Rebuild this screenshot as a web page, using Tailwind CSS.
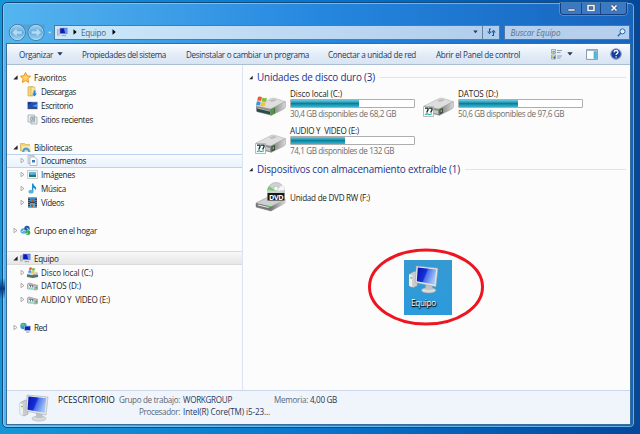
<!DOCTYPE html>
<html lang="es">
<head>
<meta charset="utf-8">
<title>Equipo</title>
<script src="https://cdn.jsdelivr.net/npm/@tailwindcss/browser@4"></script>
</head>
<body class="w-[640px] h-[434px] overflow-hidden bg-linear-to-r from-[#1696d6] via-[#0874cc] to-[#04479b] font-['Open_Sans','Noto_Sans',sans-serif] text-[8.1px] leading-[11px] text-[#1c1c1c] whitespace-nowrap">
<svg class="absolute w-0 h-0">
  <defs>
    <linearGradient id="scr" x1="0" y1="0" x2="1" y2="0.35"><stop offset="0" stop-color="#0712a8"/><stop offset=".5" stop-color="#1530d8"/><stop offset=".58" stop-color="#4a72ea"/><stop offset="1" stop-color="#a3c3f6"/></linearGradient>
    <linearGradient id="dark" x1="0" y1="0" x2="1" y2="0"><stop offset="0" stop-color="#777"/><stop offset="1" stop-color="#d8d8d8"/></linearGradient>
    <linearGradient id="nav" x1="0" y1="0" x2="0" y2="1"><stop offset="0" stop-color="#a9d3f3"/><stop offset=".5" stop-color="#5fa9de"/><stop offset="1" stop-color="#9fdcf8"/></linearGradient>
    <symbol id="pc" viewBox="0 0 30 28">
      <path d="M1 9l5-3 3 1v13l-4 2-4-2z" fill="#c9cdd0" stroke="#8d9296" stroke-width=".5"/>
      <path d="M1 9l3 1v11.500l-3-1.500z" fill="#eee"/><circle cx="3" cy="12.500" r=".8" fill="#4eb84e"/>
      <ellipse cx="20" cy="24.500" rx="7" ry="2.600" fill="#d9dcde" stroke="#a1a5a8" stroke-width=".5"/>
      <path d="M17 18h6l1 6h-7z" fill="#bfc3c6"/>
      <path d="M8 1l21 2-2 18L7 17z" fill="#e3e6e8" stroke="#9ba0a5" stroke-width=".5"/>
      <path d="M9.500 2.500l17.800 1.800-1.800 14.500L8.500 15.700z" fill="url(#scr)"/>
    </symbol>
    <symbol id="pcs" viewBox="0 0 12 11">
      <path d="M.5 3h2v6h-2z" fill="#cfd3d8" stroke="#888" stroke-width=".5"/><path d="M3 1h8.500v6.500H3z" fill="#0c1cba" stroke="#c9d2e2" stroke-width=".7"/><path d="M7.500 1.400h3.600v5.700H9z" fill="#6e8fe8"/><path d="M5 8.700h5v1.400H5z" fill="#a5aab2"/>
    </symbol>
    <symbol id="drive" viewBox="0 0 32 20">
      <path d="M1 9L16 1.500Q18 .7 20 1.300L30 4.500 16 12z" fill="#dedede" stroke="#aaa" stroke-width=".5"/>
      <path d="M14 3.500l5-1.500 3 1-5 2z" fill="#bbb"/>
      <path d="M1 9l15 3v6.500l-14-3.500Q1 14.500 1 13z" fill="#8e8e8e"/>
      <path d="M16 12L30.500 4.500V10Q30 11.500 28 12.500L16 18.500z" fill="url(#dark)" stroke="#8a8a8a" stroke-width=".4"/>
      <path d="M3 11l12 3v3L3 14z" fill="#c8c8c8"/>
      <path d="M16.500 12.500l3.500-1.500v5l-3.500 1.500z" fill="#3f4b42"/><path d="M17.500 13l1.500-.6v2.600l-1.500.6z" fill="#3bd63b"/>
    </symbol>
    <symbol id="flag" viewBox="0 0 12 11">
      <path d="M2 1q2-1 4 .3L5 5Q3 4 1 4.800z" fill="#ef5a28"/><path d="M6.500 1.600q2 1 4.500.2L10 5.500q-2 .8-4.500-.2z" fill="#80bd3a"/><path d="M.8 5.500q2-.8 4 .3L3.800 9.500Q2 8.500 0 9.200z" fill="#3597df"/><path d="M5.300 6q2 1 4.500.3L8.800 10q-2.500.7-4.500-.3z" fill="#fbc42b"/>
    </symbol>
    <symbol id="lab" viewBox="0 0 11 11">
      <path d="M.5.500h10v10H.5z" fill="#f7fbfb" stroke="#a3abad" stroke-width=".8"/><path d="M2 2.200h3v1.700L3.700 6.500M6 2.200h3v1.700L7.700 6.500" fill="none" stroke="#172b2b" stroke-width="1.300"/><path d="M2 8.700l2-1 2 1 3-1" fill="none" stroke="#23b0a8" stroke-width="1.200"/>
    </symbol>
    <symbol id="open" viewBox="0 0 5 5"><path d="M4.600.3v4.300H.3z" fill="#222"/></symbol>
    <symbol id="shut" viewBox="0 0 5 5"><path d="M1 .3l3 2.200-3 2.200z" fill="#fff" stroke="#8c8c8c" stroke-width=".7"/></symbol>
    <symbol id="down" viewBox="0 0 6 4"><path d="M.3.300h5.400L3 3.600z" fill="#1e395b"/></symbol>
  </defs>
</svg>
<div class="absolute left-0 top-[278px] w-[5px] h-[21px] bg-linear-to-b from-transparent via-[#063a86] to-transparent"></div>

<div class="ml-[2px] w-[633px] h-[428px] pt-[2px]">
<main class="w-[633px] h-[426px] rounded-[5px] border border-[#164a7b] bg-linear-to-r from-[#55b5ef] via-[#2587df] to-[#1764bd] shadow-[inset_0_0_0_1px_rgba(140,215,255,.65)] px-1 flex flex-col">
  <header class="h-[22px] shrink-0 flex justify-end pr-[3px]">
    <div class="w-[67px] h-[12px] flex border border-t-0 border-[#133e80] rounded-b-[3px] bg-[#3b79c2] shadow-[0_0_0_.5px_#79aee1]">
      <div class="w-[21px] border-r border-[#174586] flex justify-center"><svg class="w-[9px] h-[11px]" viewBox="0 0 9 11"><path d="M1 6h7v2H1z" fill="#fff" stroke="#424b66" stroke-width=".6"/></svg></div>
      <div class="w-[19px] border-r border-[#174586] flex justify-center"><svg class="w-[10px] h-[11px]" viewBox="0 0 10 11"><path d="M2 2.500h6v5H2z" fill="none" stroke="#35435f" stroke-width="2.300"/><path d="M2 2.500h6v5H2z" fill="none" stroke="#fff" stroke-width="1.500"/></svg></div>
      <div class="flex-1 flex justify-center"><svg class="w-[10px] h-[11px]" viewBox="0 0 10 11"><path d="M2.500 2.500l5 5m0-5l-5 5" stroke="#35435f" stroke-width="2.700"/><path d="M2.500 2.500l5 5m0-5l-5 5" stroke="#fff" stroke-width="1.700"/></svg></div>
    </div>
  </header>
  <nav class="h-[14px] shrink-0 flex items-center pl-[1px]">
    <svg class="w-[46px] h-[19px] shrink-0" viewBox="0 0 46 19">
      <path d="M9 1.500h28v3q-14 5-28 0z" fill="#4b95cc" opacity=".5"/>
      <g fill="url(#nav)" stroke="#396d94" stroke-width=".9"><circle cx="9.300" cy="9.500" r="8"/><circle cx="28" cy="9.500" r="8"/></g>
      <g fill="none" stroke="#b7e1fa" stroke-width=".6"><circle cx="9.300" cy="9.500" r="7.200"/><circle cx="28" cy="9.500" r="7.200"/></g>
      <path d="M4 9.500L9 4.700v3.300h5v3H9v3.300zM33.300 9.500l-5-4.800v3.300h-5v3h5v3.300z" fill="#b4dbf3" stroke="#75aed6" stroke-width=".5"/>
      <path d="M39.500 8.500h4.500l-2.200 2.600z" fill="#bfe1f6" stroke="#5e97c4" stroke-width=".4"/>
    </svg>
    <div class="w-[448px] h-[15px] border border-[#4e7b9f] bg-linear-to-r from-[#cbe8fa] to-[#b2cdec] flex items-center">
      <svg class="ml-[2px] w-[11px] h-[10px]"><use href="#pcs"/></svg>
      <svg class="ml-[5px] w-[4px] h-[6px]" viewBox="0 0 4 6"><path d="M.5.300L3.700 3 .5 5.700z"/></svg>
      <span class="ml-[4px] text-[#4c6377]" data-w="25">Equipo</span>
      <svg class="ml-[6px] w-[4px] h-[6px]" viewBox="0 0 4 6"><path d="M.5.300L3.700 3 .5 5.700z"/></svg>
      <svg class="ml-auto mr-[4px] w-[5px] h-[4px]"><use href="#down"/></svg>
      <div class="w-[17px] h-[13px] border-l border-[#64849f] flex justify-center items-center"><svg class="w-[9px] h-[10px]" viewBox="0 0 9 10"><path d="M4 2H2.500v3M.7 4.500l1.800 2 1.500-2M5 8.500h1.500V4.800M4.800 5.500l1.700-2 1.800 2" fill="none" stroke="#135ca6" stroke-width="1.100"/></svg></div>
    </div>
    <div class="ml-[4px] w-[126px] h-[15px] border border-[#4e749f] bg-[#b6cfec] flex items-center pl-[5px] pr-[3px]">
      <span class="italic text-[#59718a]" data-w="50">Buscar Equipo</span>
      <svg class="ml-auto w-[9px] h-[9px]" viewBox="0 0 9 9"><circle cx="5.500" cy="3.400" r="2.500" fill="#dff0fc" stroke="#256bad"/><path d="M3.600 5.300L.8 8.200" stroke="#256bad" stroke-width="1.400"/></svg>
    </div>
  </nav>

  <div class="mt-[5px] w-[623px] h-[380px] ring-1 ring-[#366f9e] flex flex-col bg-[#fcfcfc]">
    <div class="h-[21px] shrink-0 border-b border-[#a9bdd4] bg-linear-to-b from-[#fafcff] via-[#e4edf8] to-[#d8e4f3] flex items-center pl-[12px] text-[#1e395b]">
      <span data-w="34">Organizar</span><svg class="ml-[4px] w-[6px] h-[4px]"><use href="#down"/></svg>
      <span class="ml-[19px]" data-w="84">Propiedades del sistema</span>
      <span class="ml-[20px]" data-w="123">Desinstalar o cambiar un programa</span>
      <span class="ml-[19px]" data-w="88">Conectar a unidad de red</span>
      <span class="ml-[20px]" data-w="84">Abrir el Panel de control</span>
      <svg class="ml-[31px] w-[12px] h-[11px]" viewBox="0 0 12 11"><path d="M.5.500h4v4h-4zM.5 6h4v4h-4z" fill="#d8e6ee" stroke="#809aa9" stroke-width=".7"/><path d="M1.500 2.800h2.300" stroke="#478a56" stroke-width="1.200"/><path d="M1 7h1.500v2H1z" fill="#e8c137"/><path d="M2.700 7.500h1.500v2H2.700z" fill="#284e9e"/><path d="M6 1.500h5M6 3.500h3.500M6 7h5M6 9h3.500" stroke="#8198a8" stroke-width=".9"/></svg>
      <svg class="ml-[4px] w-[6px] h-[4px]"><use href="#down"/></svg>
      <svg class="ml-[13px] w-[12px] h-[11px]" viewBox="0 0 11 10"><path d="M.5.500h10v9H.5z" fill="#fbfdff" stroke="#7790a3" stroke-width=".8"/><path d="M1 1.200h9" stroke="#96aec3"/><path d="M7 2h3v7H7z" fill="#51b4d1"/></svg>
      <svg class="ml-[12px] w-[12px] h-[12px]" viewBox="0 0 11 11"><circle cx="5.500" cy="5.500" r="4.800" fill="#153ba6" stroke="#8ba0bd" stroke-width="1"/><path d="M3.700 4q.2-1.800 2-1.700 1.800.2 1.600 1.700-.2.900-1.200 1.300-.5.300-.5 1.200M5.600 7.500v1.200" fill="none" stroke="#fff" stroke-width="1.200"/></svg>
    </div>

    <div class="h-[325px] shrink-0 flex">
      <aside class="w-[236px] border-r border-[#d9e5f4] pt-[5.700px] flex flex-col">
        <div class="h-[13.900px] pl-[6px] flex items-center"><svg class="w-[5px] h-[5px]"><use href="#open"/></svg><svg class="ml-[2px] w-[11px] h-[11px]" viewBox="0 0 11 11"><path d="M5.500.5l1.500 3.300 3.500.4-2.600 2.500.7 3.700-3.100-1.800-3.100 1.800.7-3.700L.5 4.200 4 3.800z" fill="#ffd35c" stroke="#ed851c" stroke-width=".9"/></svg><span class="ml-[3px]" data-w="32">Favoritos</span></div>
        <div class="h-[13.900px] pl-[20px] flex items-center"><svg class="w-[11px] h-[11px]" viewBox="0 0 11 11"><path d="M1 .8l5-.3v9.500H1z" fill="#f4d67b" stroke="#c69f3d" stroke-width=".6"/><path d="M4 1h4v8.500H4z" fill="#fbe8a5" stroke="#c69f3d" stroke-width=".5"/><path d="M6.500 4.500h2v3H10l-2.500 3L5 7.500h1.500z" fill="#2388dc"/></svg><span class="ml-[3px]" data-w="35">Descargas</span></div>
        <div class="h-[13.900px] pl-[20px] flex items-center"><svg class="w-[11px] h-[11px]" viewBox="0 0 11 11"><path d="M.5 2h10v7H.5z" fill="#1c50b8" stroke="#a8b4c0" stroke-width=".7"/><path d="M1 5q5-4 9-2.700V2.300H1z" fill="#123280"/><path d="M1 8.500h9" stroke="#3a4f75"/><path d="M5 6l5-2v3z" fill="#5298df"/></svg><span class="ml-[3px]" data-w="32">Escritorio</span></div>
        <div class="h-[13.900px] pl-[20px] flex items-center"><svg class="w-[11px] h-[11px]" viewBox="0 0 11 11"><path d="M1 1h6.500v7H1zM4 3h6v7H4z" fill="#e6ebee" stroke="#98a1a7" stroke-width=".7"/><circle cx="5.500" cy="5" r="2" fill="#c5d8e1" stroke="#788e9a" stroke-width=".6"/><path d="M5.500 4v1.300h1" fill="none" stroke="#466" stroke-width=".5"/></svg><span class="ml-[3px]" data-w="52">Sitios recientes</span></div>
        <div class="h-[13.900px]"></div>
        <div class="h-[13.900px] pl-[6px] flex items-center"><svg class="w-[5px] h-[5px]"><use href="#open"/></svg><svg class="ml-[2px] w-[11px] h-[11px]" viewBox="0 0 11 11"><path d="M.5 1.500h4l1 1h4v6.500h-9z" fill="#f1d471" stroke="#cba543" stroke-width=".6"/><path d="M2 4h8.500v5H2z" fill="#fbeaa8"/><path d="M2 10q.5-4.500 4-4.500T10.500 10H8.300q-.2-2-2.200-2T4.200 10z" fill="#4f9fdc"/></svg><span class="ml-[3px]" data-w="38">Bibliotecas</span></div>
        <div class="h-[13.900px] pl-[13px] flex items-center border-y border-[#bad3ee] bg-linear-to-b from-[#f9fbfe] to-[#eaf2fc]"><svg class="w-[5px] h-[5px]"><use href="#shut"/></svg><svg class="ml-[2px] w-[11px] h-[11px] shrink-0" viewBox="0 0 11 11"><path d="M1 .5h6v8H1z" fill="#dfe5ea" stroke="#9da7af" stroke-width=".6"/><path d="M3 2h4.500L10 4v6.500H3z" fill="#fff" stroke="#8c979f" stroke-width=".6"/><path d="M5 5h3v2.500H5z" fill="#3d7abb"/></svg><span class="ml-[3px]" data-w="45">Documentos</span></div>
        <div class="h-[13.900px] pl-[13px] flex items-center"><svg class="w-[5px] h-[5px]"><use href="#shut"/></svg><svg class="ml-[2px] w-[11px] h-[11px]" viewBox="0 0 11 11"><path d="M.5 1.500h10v8H.5z" fill="#f4f7f8" stroke="#a2acb3" stroke-width=".6"/><path d="M2 3h7v5H2z" fill="#5eb4dd"/><path d="M2 5l2 1 5-.5V8H2z" fill="#28766d"/></svg><span class="ml-[3px]" data-w="34">Imágenes</span></div>
        <div class="h-[13.900px] pl-[13px] flex items-center"><svg class="w-[5px] h-[5px]"><use href="#shut"/></svg><svg class="ml-[2px] w-[11px] h-[11px]" viewBox="0 0 11 11"><path d="M5 .5h1.300q.3 2 2 3 1.700 1.500 0 3.700.2-2-2-2.500V8.700H5z" fill="#228bd2"/><ellipse cx="4" cy="8.700" rx="2.600" ry="1.900" fill="#48b7ed"/></svg><span class="ml-[3px]" data-w="25">Música</span></div>
        <div class="h-[13.900px] pl-[13px] flex items-center"><svg class="w-[5px] h-[5px]"><use href="#shut"/></svg><svg class="ml-[2px] w-[11px] h-[11px]" viewBox="0 0 11 11"><path d="M1 .5h9v10H1z" fill="#343e47"/><path d="M3 1h5v4H3z" fill="#3689c5"/><path d="M3 6h5v4H3z" fill="#56aad8"/><path d="M5 2.500h2V5H5zM4 7.500h2V10H4z" fill="#b65931"/><path d="M2 1v10M9 1v10" stroke="#d4dde2" stroke-width=".8" stroke-dasharray="1 1"/></svg><span class="ml-[3px]" data-w="23">Vídeos</span></div>
        <div class="h-[13.900px]"></div>
        <div class="h-[13.900px] pl-[6px] flex items-center"><svg class="w-[5px] h-[5px]"><use href="#shut"/></svg><svg class="ml-[2px] w-[11px] h-[11px]" viewBox="0 0 11 11"><circle cx="3.300" cy="6" r="2.800" fill="#5ca9e5"/><circle cx="7" cy="3.500" r="2.700" fill="#2454ac"/><circle cx="7.800" cy="7.500" r="2.500" fill="#39a84d"/><path d="M2 7l2-2 2 1M6.500 3l2 1-1 2M6 9l2-1" fill="none" stroke="#d8f3ff" stroke-width=".8"/></svg><span class="ml-[3px]" data-w="63">Grupo en el hogar</span></div>
        <div class="h-[13.900px]"></div>
        <div class="h-[13.900px] pl-[6px] flex items-center border-y border-[#dadada] bg-linear-to-b from-[#f8f8f8] to-[#e6e6e6]"><svg class="w-[5px] h-[5px]"><use href="#open"/></svg><svg class="ml-[2px] w-[11px] h-[10px]"><use href="#pcs"/></svg><span class="ml-[3px]" data-w="24.500">Equipo</span></div>
        <div class="h-[13.900px] pl-[13px] flex items-center"><svg class="w-[5px] h-[5px]"><use href="#shut"/></svg><svg class="ml-[2px] w-[11px] h-[11px]" viewBox="0 0 11 11"><use href="#drive" x="0" y="4" width="11" height="7"/><path d="M0 7.500l6 1 5-1V10L6 11 0 10z" fill="#557065"/><use href="#flag" x="1" y="0" width="8" height="7"/></svg><span class="ml-[3px]" data-w="52">Disco local (C:)</span></div>
        <div class="h-[13.900px] pl-[13px] flex items-center"><svg class="w-[5px] h-[5px]"><use href="#shut"/></svg><svg class="ml-[2px] w-[11px] h-[11px]" viewBox="0 0 11 11"><path d="M0 4.500L2 3l9 2.500V9l-2 1-9-1.500z" fill="#bbb" stroke="#8c8c8c" stroke-width=".6"/><use href="#lab" x="1" y="4" width="6" height="6"/><path d="M8.500 7h1.500v1.500H8.500z" fill="#2fae46"/></svg><span class="ml-[3px]" data-w="40">DATOS (D:)</span></div>
        <div class="h-[13.900px] pl-[13px] flex items-center"><svg class="w-[5px] h-[5px]"><use href="#shut"/></svg><svg class="ml-[2px] w-[11px] h-[11px]" viewBox="0 0 11 11"><path d="M0 4.500L2 3l9 2.500V9l-2 1-9-1.500z" fill="#bbb" stroke="#8c8c8c" stroke-width=".6"/><use href="#lab" x="1" y="4" width="6" height="6"/><path d="M8.500 7h1.500v1.500H8.500z" fill="#2fae46"/></svg><span class="ml-[3px]" data-w="69">AUDIO Y&nbsp; VIDEO (E:)</span></div>
        <div class="h-[13.900px]"></div>
        <div class="h-[13.900px] pl-[6px] flex items-center"><svg class="w-[5px] h-[5px]"><use href="#shut"/></svg><svg class="ml-[2px] w-[11px] h-[11px]" viewBox="0 0 11 11"><circle cx="3.500" cy="4" r="3.200" fill="#2c98d9"/><path d="M1 3l2-1.500 2 1-2 2z" fill="#69c75c"/><path d="M4.500 4h6v4.500h-6z" fill="#0d28b9" stroke="#b3c2d5" stroke-width=".7"/><path d="M6 10h3.500" stroke="#8c969f"/></svg><span class="ml-[3px]" data-w="13">Red</span></div>
      </aside>

      <section class="relative flex-1 pl-[6px]">
        <div class="mt-[5px] h-[15px] flex items-center"><svg class="w-[4px] h-[5px]"><use href="#open"/></svg><span class="ml-[4px] text-[9.900px] text-[#1e3287]" data-w="118">Unidades de disco duro (3)</span><div class="ml-[5px] w-[246px] h-px bg-[#e2e4ea]"></div></div>
        <div class="mt-[3px] flex h-[37px]">
          <div class="flex w-[168px] pl-[6px]"><svg class="w-[32px] h-[32px] shrink-0" viewBox="0 0 32 32"><use href="#drive" x="0" y="9" width="32" height="20"/><path d="M2 20.500l13 3v3l-13-3z" fill="#294b49"/><path d="M15.500 21.500l4-2v6l-4 2z" fill="#4b9c3a"/><use href="#flag" x="1" y="8" width="12" height="11"/></svg>
            <div class="ml-[3px]"><div class="h-[11px]"><span data-w="52">Disco local (C:)</span></div><div class="w-[125px] h-[9px] border border-[#aeaeae] rounded-[1px] bg-white"><div class="h-full bg-linear-to-b from-[#67cde0] via-[#0a809d] to-[#32b8d1]" style="width:55%"></div></div><div class="h-[11px] text-[#6d6d6d]"><span data-w="106">30,4 GB disponibles de 68,2 GB</span></div></div></div>
          <div class="flex pl-[6px]"><svg class="w-[32px] h-[32px] shrink-0" viewBox="0 0 32 32"><use href="#drive" x="0" y="9" width="32" height="20"/><use href="#lab" x="0" y="18" width="11" height="11"/></svg>
            <div class="ml-[3px]"><div class="h-[11px]"><span data-w="40">DATOS (D:)</span></div><div class="w-[125px] h-[9px] border border-[#aeaeae] rounded-[1px] bg-white"><div class="h-full bg-linear-to-b from-[#67cde0] via-[#0a809d] to-[#32b8d1]" style="width:48%"></div></div><div class="h-[11px] text-[#6d6d6d]"><span data-w="106">50,6 GB disponibles de 97,6 GB</span></div></div></div>
        </div>
        <div class="flex h-[37px] pl-[6px]"><svg class="w-[32px] h-[32px] shrink-0" viewBox="0 0 32 32"><use href="#drive" x="0" y="9" width="32" height="20"/><use href="#lab" x="0" y="18" width="11" height="11"/></svg>
          <div class="ml-[3px]"><div class="h-[11px]"><span data-w="69">AUDIO Y&nbsp; VIDEO (E:)</span></div><div class="w-[125px] h-[9px] border border-[#aeaeae] rounded-[1px] bg-white"><div class="h-full bg-linear-to-b from-[#67cde0] via-[#0a809d] to-[#32b8d1]" style="width:44%"></div></div><div class="h-[11px] text-[#6d6d6d]"><span data-w="104">74,1 GB disponibles de 132 GB</span></div></div></div>
        <div class="h-[15px] flex items-center"><svg class="w-[4px] h-[5px]"><use href="#open"/></svg><span class="ml-[4px] text-[9.900px] text-[#1e3287]" data-w="203">Dispositivos con almacenamiento extraíble (1)</span><div class="ml-[5px] w-[161px] h-px bg-[#e2e4ea]"></div></div>
        <div class="mt-[3px] flex items-center h-[34px] pl-[6px]"><svg class="w-[32px] h-[32px]" viewBox="0 0 32 32"><circle cx="21" cy="10" r="8.500" fill="#cdd1d1" stroke="#a8adad" stroke-width=".6"/><path d="M21 10L14 5q-1.500 2-1.500 4z" fill="#75cf64"/><path d="M21 10l6-6q2.500 2.500 2.500 5z" fill="#f6f6f6"/><circle cx="21" cy="7.500" r="2.200" fill="#f8f8f8" stroke="#aaa" stroke-width=".5"/><path d="M1 22l12-6 17 2v4l-14 8-15-4z" fill="#cfcfcf" stroke="#888" stroke-width=".5"/><path d="M1 22l15 3.500v4.500L1 26z" fill="#777"/><path d="M3 24l11 2.600" stroke="#eee"/><path d="M16 25.500L30 18v4l-14 8z" fill="url(#dark)"/><path d="M12 24.500l2.500.6v1.700l-2.500-.6z" fill="#4bd54b"/><path d="M12.500 12h17v7.500h-17z" fill="#171717"/><text x="14" y="18.500" font-size="7.200" font-weight="bold" textLength="14.500" fill="#fff" font-family="Open Sans">DVD</text></svg><span class="ml-[3px]" data-w="80">Unidad de DVD RW (F:)</span></div>
        <svg class="absolute left-[124px] top-[182px] w-[119px] h-[80px]" viewBox="0 0 119 80"><ellipse cx="59" cy="40" rx="56.500" ry="37" fill="none" stroke="#ed1620" stroke-width="3"/></svg>
        <div class="absolute left-[161px] top-[195px] w-[48px] h-[55px] bg-linear-to-b from-[#3599d2] to-[#2a9bdc] flex flex-col items-center pt-[5px]"><svg class="w-[31px] h-[29px] -ml-[9px]"><use href="#pc"/></svg><span class="mt-[3px] -ml-[9px] text-white [text-shadow:0_1px_1px_#000,1px_1px_1px_#000]" data-w="25">Equipo</span></div>
      </section>
    </div>
    <footer class="flex-1 border-t border-[#cbd7e8] bg-[#f0f4fb] flex pl-[12px] pt-[2px] text-[#1e395b]">
      <svg class="mt-px w-[30px] h-[28px]"><use href="#pc"/></svg>
      <div class="ml-[9px] pt-[1px]">
        <div class="h-[12px] flex"><span class="text-[#111] w-[61px]"><span data-w="57">PCESCRITORIO</span></span><span class="text-[#5a6779] w-[64px]"><span data-w="61">Grupo de trabajo:</span></span><span class="w-[91px]"><span data-w="49">WORKGROUP</span></span><span class="text-[#5a6779] w-[37px]"><span data-w="34">Memoria:</span></span><span class="ml-[-1px]" data-w="27">4,00 GB</span></div>
        <div class="h-[12px] flex pl-[81px]"><span class="text-[#5a6779] w-[44px]"><span data-w="41">Procesador:</span></span><span data-w="87">Intel(R) Core(TM) i5-23...</span></div>
      </div>
    </footer>
  </div>
</main>
</div>
<script>
function fitLabels() {
  document.querySelectorAll('[data-w]').forEach(el => {
    el.style.display = 'inline-block';
    el.style.flexShrink = 0;
    el.style.letterSpacing = '0px';
    const w = el.getBoundingClientRect().width;
    el.style.letterSpacing = (el.dataset.w - w) / el.textContent.length + 'px';
  });
}
new ResizeObserver(fitLabels).observe(document.body);
window.addEventListener('load', fitLabels);
document.fonts.ready.then(fitLabels);
</script>
</body>
</html>
